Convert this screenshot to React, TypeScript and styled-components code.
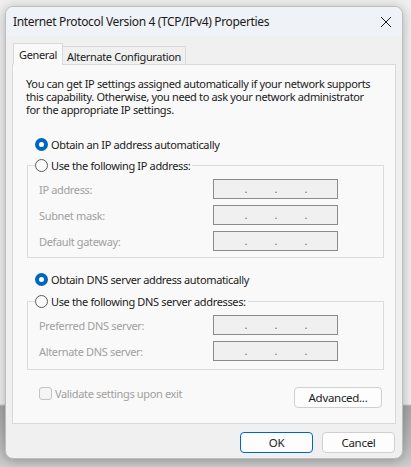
import React from 'react';
import styled, { createGlobalStyle } from 'styled-components';

const Global = createGlobalStyle`
  html, body {
    margin: 0;
    padding: 0;
  }
  body {
    font-family: "Noto Sans", "Open Sans", sans-serif;
    font-size: 11px;
    letter-spacing: -0.35px;
    color: #1b1b1b;
  }
`;

const Desktop = styled.div`
  width: 411px;
  height: 467px;
  box-sizing: border-box;
  padding: 6px 0 0 5px;
  overflow: hidden;
  background: linear-gradient(
    to bottom,
    #efefef 0,
    #efefef 404px,
    #a6a6a6 406px,
    #b9b9b9 440px,
    #cfcfcf 467px
  );
`;

const Window = styled.div`
  width: 398px;
  height: 453px;
  box-sizing: border-box;
  border: 1px solid #bdbdbd;
  border-radius: 8px;
  background: #f0f0f0;
  box-shadow: 0 2px 12px rgba(0, 0, 0, 0.28);
  display: flex;
  flex-direction: column;
  overflow: hidden;
`;

const TitleBar = styled.div`
  height: 29px;
  display: flex;
  align-items: center;
  justify-content: space-between;
  padding: 0 10px 0 7px;
  background: #eff2f6;
  font-size: 12px;
  letter-spacing: -0.35px;
`;

const CloseButton = styled.div`
  width: 12px;
  height: 12px;
  display: flex;
`;

const Body = styled.div`
  flex: 1;
  display: flex;
  flex-direction: column;
  padding: 7px 6px 0 6px;
`;

const Tabs = styled.div`
  display: flex;
  align-items: flex-end;
  padding-left: 1px;
  position: relative;
  z-index: 1;
  margin-bottom: -1px;
`;

const Tab = styled.div<{ $active?: boolean }>`
  box-sizing: border-box;
  border: 1px solid #d9d9d9;
  border-bottom: ${(p) => (p.$active ? '1px solid #f9f9f9' : '1px solid #d9d9d9')};
  background: ${(p) => (p.$active ? '#f9f9f9' : '#f0f0f0')};
  height: ${(p) => (p.$active ? '22px' : '19px')};
  padding: 0 ${(p) => (p.$active ? '5px' : '4px')};
  margin-left: ${(p) => (p.$active ? '0' : '-1px')};
  display: flex;
  align-items: center;
  padding-top: ${(p) => (p.$active ? '0' : '1px')};
`;

const Panel = styled.div`
  width: 384px;
  height: 360px;
  box-sizing: border-box;
  border: 1px solid #d9d9d9;
  background: #f9f9f9;
  padding: 12px 13px 0 13px;
  display: flex;
  flex-direction: column;
`;

const Intro = styled.p`
  margin: 0;
  line-height: 13px;
  white-space: nowrap;
`;

const RadioRow = styled.label<{ $mt: number }>`
  display: flex;
  align-items: center;
  gap: 3px;
  height: 15px;
  margin-top: ${(p) => p.$mt}px;
  margin-left: 9px;
`;

const RadioDot = styled.span<{ $checked?: boolean }>`
  width: 13px;
  height: 13px;
  box-sizing: border-box;
  border-radius: 50%;
  flex: none;
  background: ${(p) => (p.$checked ? '#ffffff' : '#fbfbfb')};
  border: ${(p) => (p.$checked ? '4px solid #0067c0' : '1px solid #5c5c5c')};
`;

const Group = styled.fieldset<{ $mt: number; $h: number }>`
  margin: ${(p) => p.$mt}px 0 0 1px;
  width: 357px;
  height: ${(p) => p.$h}px;
  box-sizing: border-box;
  border: 1px solid #dcdcdc;
  padding: 6px 0 0 11px;
  min-width: 0;
`;

const Legend = styled.legend`
  padding: 0 2px 0 0;
  margin-left: -4px;
  display: flex;
  align-items: center;
  gap: 3px;
  height: 15px;
`;

const FieldGrid = styled.div`
  display: grid;
  grid-template-columns: 174px 125px;
  grid-auto-rows: 20px;
  row-gap: 6px;
`;

const FieldLabel = styled.span`
  color: #a0a0a0;
  display: flex;
  align-items: center;
`;

const IpBox = styled.div`
  box-sizing: border-box;
  border: 1px solid #8b8b8b;
  background: #f0f0f0;
  display: flex;
  padding-left: 3px;
  height: 20px;
`;

const Octet = styled.span`
  width: 30px;
  text-align: right;
  color: #707080;
  font-size: 11px;
  line-height: 17px;
`;

const BottomRow = styled.div`
  display: flex;
  align-items: flex-start;
  justify-content: space-between;
  margin-top: 17px;
  padding-left: 13px;
`;

const CheckRow = styled.label`
  display: flex;
  align-items: center;
  gap: 3px;
  color: #a0a0a0;
  height: 15px;
  margin-top: -1px;
`;

const CheckBox = styled.span`
  width: 13px;
  height: 13px;
  box-sizing: border-box;
  border: 1px solid #c4c4c4;
  border-radius: 3px;
  background: #f5f5f5;
`;

const Button = styled.button<{ $primary?: boolean; $w: number }>`
  width: ${(p) => p.$w}px;
  height: 21px;
  box-sizing: border-box;
  border-radius: 4px;
  border: 1px solid ${(p) => (p.$primary ? '#0067c0' : '#d0d0d0')};
  background: #fdfdfd;
  font-family: inherit;
  font-size: 11.5px;
  letter-spacing: -0.3px;
  color: #1b1b1b;
  padding: 0;
`;

const Footer = styled.div`
  display: flex;
  justify-content: flex-end;
  gap: 9px;
  padding: 8px 1px 0 0;
`;

function IpField() {
  return (
    <IpBox>
      <Octet>.</Octet>
      <Octet>.</Octet>
      <Octet>.</Octet>
    </IpBox>
  );
}

export default function App() {
  return (
    <Desktop>
      <Global />
      <Window>
        <TitleBar>
          <span>Internet Protocol Version 4 (TCP/IPv4) Properties</span>
          <CloseButton>
            <svg width="12" height="12" viewBox="0 0 12 12">
              <path d="M1 1 L11 11 M11 1 L1 11" stroke="#1b1b1b" strokeWidth="1" fill="none" />
            </svg>
          </CloseButton>
        </TitleBar>
        <Body>
          <Tabs>
            <Tab $active>General</Tab>
            <Tab>Alternate Configuration</Tab>
          </Tabs>
          <Panel>
            <Intro>
              You can get IP settings assigned automatically if your network supports
              <br />
              this capability. Otherwise, you need to ask your network administrator
              <br />
              for the appropriate IP settings.
            </Intro>
            <RadioRow $mt={21}>
              <RadioDot $checked />
              Obtain an IP address automatically
            </RadioRow>
            <Group $mt={6} $h={100}>
              <Legend>
                <RadioDot />
                Use the following IP address:
              </Legend>
              <FieldGrid>
                <FieldLabel>IP address:</FieldLabel>
                <IpField />
                <FieldLabel>Subnet mask:</FieldLabel>
                <IpField />
                <FieldLabel>Default gateway:</FieldLabel>
                <IpField />
              </FieldGrid>
            </Group>
            <RadioRow $mt={14}>
              <RadioDot $checked />
              Obtain DNS server address automatically
            </RadioRow>
            <Group $mt={7} $h={76}>
              <Legend>
                <RadioDot />
                Use the following DNS server addresses:
              </Legend>
              <FieldGrid>
                <FieldLabel>Preferred DNS server:</FieldLabel>
                <IpField />
                <FieldLabel>Alternate DNS server:</FieldLabel>
                <IpField />
              </FieldGrid>
            </Group>
            <BottomRow>
              <CheckRow>
                <CheckBox />
                Validate settings upon exit
              </CheckRow>
              <Button $w={88}>Advanced...</Button>
            </BottomRow>
          </Panel>
          <Footer>
            <Button $primary $w={73}>OK</Button>
            <Button $w={73}>Cancel</Button>
          </Footer>
        </Body>
      </Window>
    </Desktop>
  );
}
